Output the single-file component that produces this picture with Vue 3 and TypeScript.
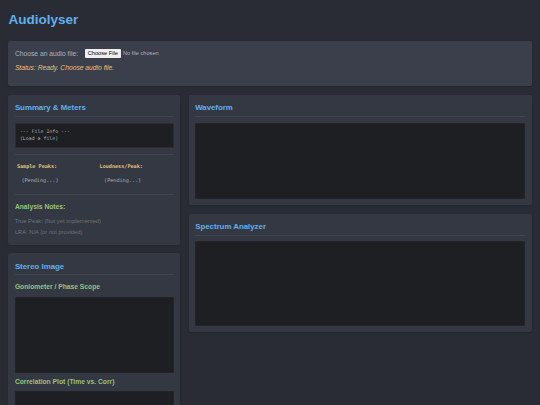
<script setup lang="ts">
import { ref, computed } from 'vue'

const file = ref<File | null>(null)

const fileName = computed(() => file.value?.name ?? 'No file chosen')

const status = computed(() =>
  file.value ? `Loaded ${file.value.name}` : 'Ready. Choose audio file.'
)

// Text shown in the file info box
const fileInfo = computed(() => {
  const body = file.value ? `${(file.value.size / 1024).toFixed(1)} KB` : '(Load a file)'
  return `--- File Info ---\n${body}`
})

const meters = [
  { label: 'Sample Peaks:', value: '(Pending...)' },
  { label: 'Loudness/Peak:', value: '(Pending...)' }
]

const notes = ['True Peak: (Not yet implemented)', 'LRA: N/A (or not provided)']

function onFileChange(event: Event) {
  const input = event.target as HTMLInputElement
  file.value = input.files?.[0] ?? null
}
</script>

<template>
  <div class="app">
    <h1>Audiolyser</h1>

    <section class="controls">
      <div class="file-row">
        <span class="file-label">Choose an audio file:</span>
        <label class="file-picker">
          <input type="file" accept="audio/*" hidden @change="onFileChange" />
          <span class="file-button">Choose File</span>
          <span class="file-name">{{ fileName }}</span>
        </label>
      </div>
      <p class="status">Status: {{ status }}</p>
    </section>

    <main class="dashboard">
      <div class="column">
        <section class="panel summary">
          <h2>Summary &amp; Meters</h2>
          <pre class="file-info">{{ fileInfo }}</pre>
          <div class="meters">
            <div v-for="meter in meters" :key="meter.label" class="meter">
              <div class="meter-label">{{ meter.label }}</div>
              <div class="meter-value">{{ meter.value }}</div>
            </div>
          </div>
          <h3>Analysis Notes:</h3>
          <p v-for="note in notes" :key="note" class="note">{{ note }}</p>
        </section>

        <section class="panel stereo">
          <h2>Stereo Image</h2>
          <h3>Goniometer / Phase Scope</h3>
          <canvas class="plot"></canvas>
          <h3>Correlation Plot (Time vs. Corr)</h3>
          <canvas class="plot"></canvas>
        </section>
      </div>

      <div class="column">
        <section class="panel">
          <h2>Waveform</h2>
          <canvas class="plot"></canvas>
        </section>
        <section class="panel">
          <h2>Spectrum Analyzer</h2>
          <canvas class="plot spectrum"></canvas>
        </section>
      </div>
    </main>
  </div>
</template>

<style>
body {
  margin: 0;
  background: #292c34;
}
</style>

<style scoped>
.app {
  box-sizing: border-box;
  height: 405px;
  overflow: hidden;
  padding: 12px 8.4px 0;
  background: #292c34;
  color: #abb2bf;
  font-family: "Liberation Sans", Arial, sans-serif;
  font-size: 6.73px;
}

h1,
h2,
h3,
p,
pre {
  margin: 0;
}

h1 {
  height: 29.3px;
  color: #61afef;
  font-size: 13.5px;
  line-height: 16px;
}

.controls {
  box-sizing: border-box;
  height: 45px;
  padding: 6.5px;
  border-radius: 2px;
  background: #3b3f4b;
  box-shadow: 0 1px 2px rgba(0, 0, 0, 0.15);
}

.file-row {
  display: flex;
  align-items: center;
  height: 11px;
}

.file-picker {
  display: flex;
  align-items: center;
  margin-left: 6.6px;
  font-size: 5.65px;
}

.file-button {
  box-sizing: border-box;
  height: 8.5px;
  padding: 0 3.1px;
  border-radius: 1px;
  background: #efefef;
  color: #000;
  line-height: 8.5px;
}

.file-name {
  margin-left: 2px;
}

.status {
  margin-top: 4.2px;
  color: #e5c07b;
  font-style: italic;
  line-height: 10px;
}

.dashboard {
  display: grid;
  grid-template-columns: 171.7px 1fr;
  gap: 8.6px;
  align-items: start;
  margin-top: 8.7px;
}

.column {
  display: flex;
  flex-direction: column;
  gap: 8.6px;
}

.panel {
  padding: 6.5px;
  border-radius: 2px;
  background: #343842;
  box-shadow: 0 1px 2px rgba(0, 0, 0, 0.15);
}

.summary {
  box-sizing: border-box;
  height: 149.8px;
}

h2 {
  box-sizing: border-box;
  height: 15.5px;
  margin-bottom: 5.7px;
  border-bottom: 1px solid #3f444e;
  color: #61afef;
  font-size: 7.85px;
  line-height: 13.2px;
}

h3 {
  color: #98c379;
  font-size: 6.73px;
  line-height: 8px;
}

.file-info {
  box-sizing: border-box;
  height: 25px;
  padding: 4px;
  border: 1px solid #2a2d33;
  border-radius: 1px;
  background: #1e1f23;
  font-family: "DejaVu Sans Mono", monospace;
  font-size: 4.9px;
  line-height: 7.8px;
}

.meters {
  box-sizing: border-box;
  display: grid;
  grid-template-columns: 1fr 1fr;
  column-gap: 8.6px;
  height: 41px;
  margin: 6.4px 0 8px;
  padding: 7.4px 0 0 2px;
  border-top: 1px solid #3f444e;
  border-bottom: 1px solid #3f444e;
  font-family: "DejaVu Sans Mono", monospace;
  font-size: 5.15px;
  line-height: 8px;
}

.meter-label {
  color: #e5c07b;
  font-weight: bold;
}

.meter-value {
  margin-top: 5.7px;
  padding-left: 4.5px;
}

.note {
  color: #6c727d;
  font-size: 5.75px;
  line-height: 6.3px;
}

.note + .note {
  margin-top: 4.9px;
}

h3 + .note {
  margin-top: 7.2px;
}

.plot {
  box-sizing: border-box;
  display: block;
  width: 100%;
  height: 76px;
  border: 1px solid #222429;
  border-radius: 1px;
  background: #1e1f23;
}

.spectrum {
  height: 84.4px;
}

.stereo h3 {
  margin: 7.6px 0 5.6px;
}

.stereo .plot + h3 {
  margin-top: 5.3px;
}
</style>
